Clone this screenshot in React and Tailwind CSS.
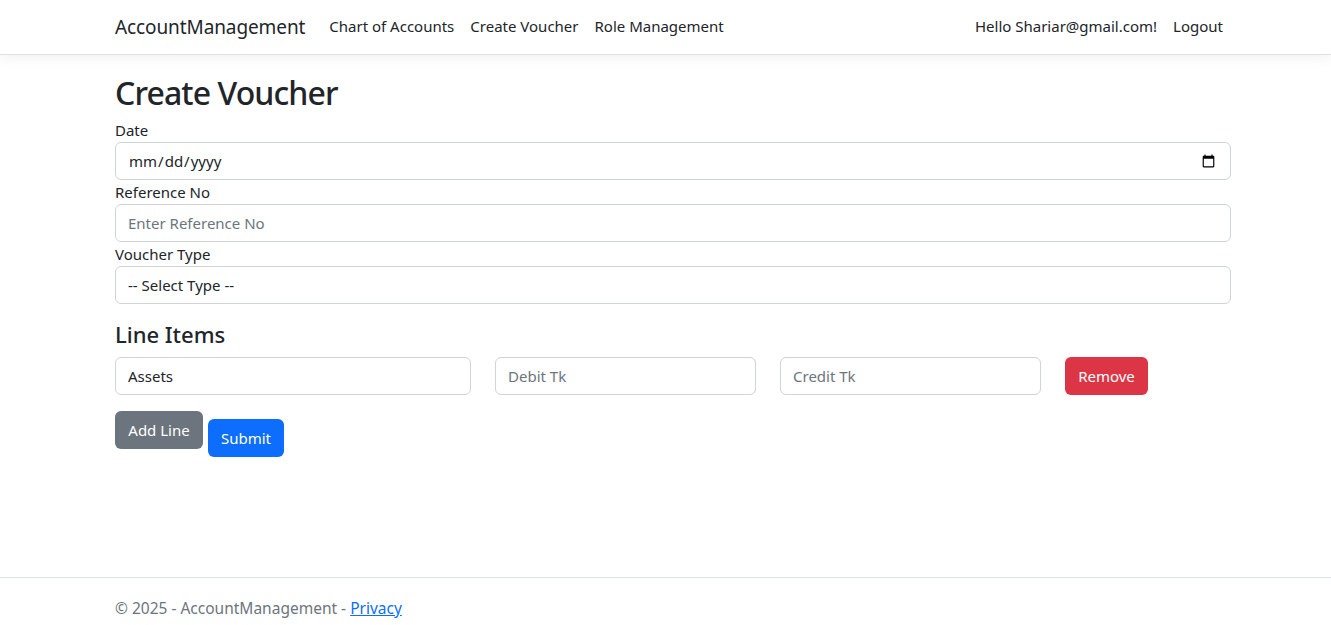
import React from "react";

const inputCls =
  "block w-full h-[38px] px-3 border border-[#ced4da] rounded-md bg-white text-[15px] text-[#212529] placeholder:text-[#6c757d] outline-none";

const Field = ({ label, children }) => (
  <div>
    <label className="block leading-6 text-[15px]">{label}</label>
    {children}
  </div>
);

export default function App() {
  return (
    <div
      className="min-h-screen flex flex-col bg-white text-[#212529]"
      style={{ fontFamily: '"Noto Sans", "Open Sans", sans-serif' }}
    >
      <header className="h-[55px] border-b border-[#dee2e6] bg-white shadow-[0_4px_12px_rgba(0,0,0,0.05)] shrink-0">
        <div className="ml-[115px] w-[1116px] h-full pb-[2px] flex items-center justify-between">
          <div className="flex items-center">
            <a className="text-[19px] tracking-[-0.1px] mr-4 leading-[30px] pt-[1px]">AccountManagement</a>
            <nav className="flex items-center text-[15px]">
              <a className="px-2">Chart of Accounts</a>
              <a className="px-2">Create Voucher</a>
              <a className="px-2">Role Management</a>
            </nav>
          </div>
          <div className="flex items-center text-[15px]">
            <span className="px-2">Hello Shariar@gmail.com!</span>
            <a className="px-2">Logout</a>
          </div>
        </div>
      </header>

      <main className="flex-1">
        <div className="ml-[115px] w-[1116px] pt-[18px]">
          <h1 className="text-[32px] font-medium tracking-[-0.9px] leading-[40px] mb-[5px]">
            Create Voucher
          </h1>

          <Field label="Date">
            <input type="date" className={inputCls} />
          </Field>
          <Field label="Reference No">
            <input type="text" placeholder="Enter Reference No" className={inputCls} />
          </Field>
          <Field label="Voucher Type">
            <select className={`${inputCls} appearance-none`} defaultValue="">
              <option value="">-- Select Type --</option>
            </select>
          </Field>

          <h4 className="text-[22px] font-medium leading-[29px] mt-4 mb-2">Line Items</h4>

          <div className="flex gap-6 mt-2">
            <div className="w-[356px]">
              <input type="text" defaultValue="Assets" className={inputCls} />
            </div>
            <div className="w-[261px]">
              <input type="text" placeholder="Debit Tk" className={inputCls} />
            </div>
            <div className="w-[261px]">
              <input type="text" placeholder="Credit Tk" className={inputCls} />
            </div>
            <div>
              <button className="h-[38px] w-[83px] rounded-md bg-[#dc3545] text-white text-[15px]">
                Remove
              </button>
            </div>
          </div>

          <div className="flex items-start gap-[5px] mt-4">
            <button className="h-[38px] w-[88px] rounded-md bg-[#6c757d] text-white text-[15px]">
              Add Line
            </button>
            <button className="h-[38px] w-[76px] mt-2 rounded-md bg-[#0d6efd] text-white text-[15px]">
              Submit
            </button>
          </div>
        </div>
      </main>

      <footer className="h-12 border-t border-[#dee2e6] shrink-0">
        <div className="ml-[115px] w-[1116px] pt-[18px] leading-6 text-[15.5px] text-[#6c757d]">
          © 2025 - AccountManagement -{" "}
          <a className="text-[#0d6efd] underline">Privacy</a>
        </div>
      </footer>
    </div>
  );
}
